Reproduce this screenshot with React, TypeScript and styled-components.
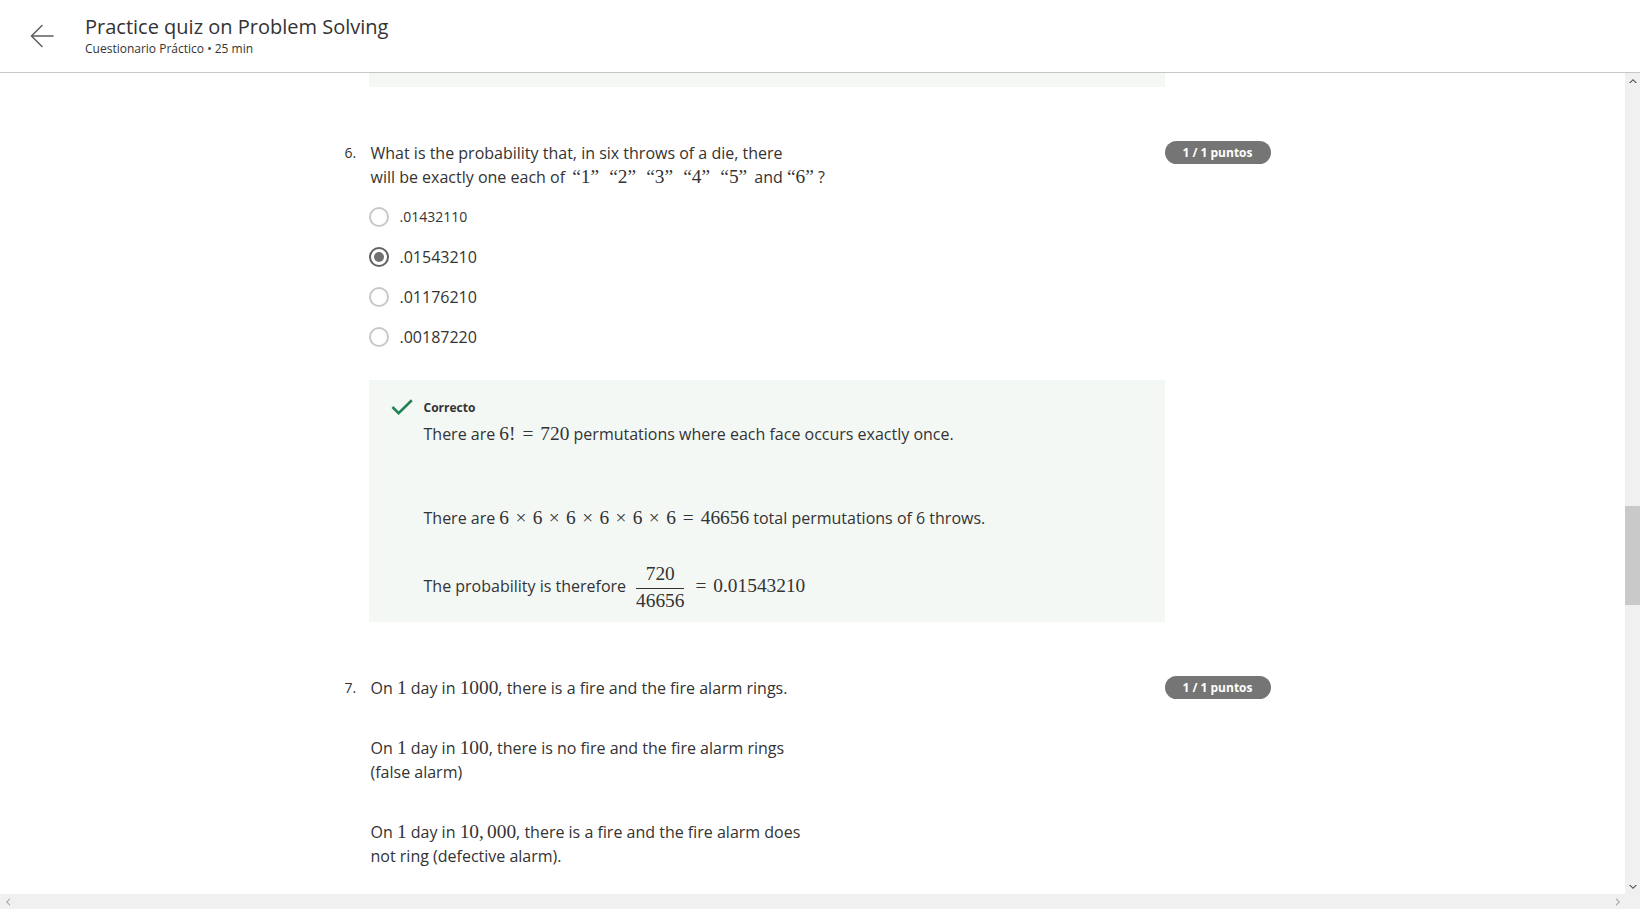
import React, { useCallback, useLayoutEffect, useRef, useState } from "react";
import styled, { createGlobalStyle } from "styled-components";

const GlobalStyle = createGlobalStyle`
  html, body {
    margin: 0;
    padding: 0;
    height: 100%;
    overflow: hidden;
    background: #ffffff;
  }
  body {
    font-family: "Open Sans", "Noto Sans", "Liberation Sans", sans-serif;
    color: #333333;
  }
  #root { height: 100%; }
  * { box-sizing: border-box; }
`;

const Page = styled.div`
  height: 100vh;
  display: flex;
  flex-direction: column;
`;

const Header = styled.header`
  flex: none;
  height: 73px;
  border-bottom: 1px solid #c6c6c6;
  display: flex;
  align-items: center;
  padding-left: 30px;
  gap: 31px;
  background: #ffffff;
`;

const BackButton = styled.button`
  border: 0;
  background: transparent;
  padding: 0;
  width: 24px;
  height: 24px;
  display: flex;
  align-items: center;
  justify-content: center;
  cursor: pointer;
`;

const TitleBlock = styled.div`
  display: flex;
  flex-direction: column;
  padding-bottom: 2px;
`;

const Title = styled.h1`
  margin: 0;
  font-size: 20px;
  line-height: 26px;
  font-weight: 400;
  color: #333333;
`;

const Subtitle = styled.div`
  margin-top: 1px;
  font-size: 12px;
  line-height: 16px;
  color: #333333;
`;

/* viewport: content + custom scrollbars */
const Viewport = styled.div`
  flex: 1;
  min-height: 0;
  display: grid;
  grid-template-columns: 1fr 15px;
  grid-template-rows: 1fr 15px;
`;

const ScrollArea = styled.main`
  min-height: 0;
  min-width: 0;
  overflow: scroll;
  position: relative;
  scrollbar-width: none;
  &::-webkit-scrollbar {
    display: none;
  }
`;

const VScrollbar = styled.div`
  background: #f0f0f0;
  display: flex;
  flex-direction: column;
  min-height: 0;
`;

const HScrollbar = styled.div`
  background: #f0f0f0;
  display: flex;
  flex-direction: row;
  align-items: stretch;
`;

const Corner = styled.div`
  background: #f0f0f0;
`;

const ScrollButton = styled.div`
  flex: none;
  width: 15px;
  height: 15px;
  display: flex;
  align-items: center;
  justify-content: center;
`;

const Track = styled.div`
  flex: 1;
  min-height: 0;
  display: flex;
  flex-direction: column;
`;

const Thumb = styled.div`
  flex: none;
  width: 15px;
  background: #c9c9c9;
`;

const Column = styled.div`
  width: 936px;
  margin: 0 auto;
  padding-right: 10px;
`;

const EarlierQuestions = styled.div`
  height: 3300px;
`;

const LaterQuestions = styled.div`
  height: 2300px;
`;

const Question = styled.section`
  display: grid;
  grid-template-columns: 24px 796px auto;
  align-items: start;
  margin-top: 54px;
`;

const Num = styled.div`
  font-size: 14px;
  line-height: 24px;
  color: #333333;
`;

const Body = styled.div`
  display: flex;
  flex-direction: column;
`;

const Para = styled.p<{ $gap?: number }>`
  margin: ${(p) => p.$gap ?? 0}px 0 0 0;
  font-size: 16px;
  line-height: 24px;
  color: #333333;
`;

const Prompt = styled(Para)`
  padding-left: 2px;
`;

const Badge = styled.div`
  width: 106px;
  height: 23px;
  border-radius: 12px;
  background: #757575;
  color: #ffffff;
  font-size: 12px;
  font-weight: 700;
  display: flex;
  align-items: center;
  justify-content: center;
`;

const M = styled.span`
  font-family: "Liberation Serif", "DejaVu Serif", serif;
  font-size: 1.21em;
  line-height: 1;
`;

const Quote = styled(M)`
  margin: 0 3px;
`;

const Rel = styled.span`
  margin: 0 0.36em;
`;

const Bin = styled.span`
  margin: 0 0.33em;
`;

const Punct = styled.span`
  margin-right: 0.1667em;
`;

const OptionList = styled.div`
  margin-top: 8px;
  display: flex;
  flex-direction: column;
`;

const OptionRow = styled.label`
  height: 40px;
  display: flex;
  align-items: center;
  gap: 11px;
  cursor: pointer;
`;

const Radio = styled.span<{ $checked?: boolean }>`
  flex: none;
  width: 20px;
  height: 20px;
  border-radius: 50%;
  border: ${(p) => (p.$checked ? "2px solid #616161" : "2px solid #c8c8c8")};
  display: flex;
  align-items: center;
  justify-content: center;
  background: #ffffff;

  &::after {
    content: "";
    display: ${(p) => (p.$checked ? "block" : "none")};
    width: 10px;
    height: 10px;
    border-radius: 50%;
    background: #707070;
  }
`;

const OptionText = styled.span<{ $small?: boolean }>`
  font-size: ${(p) => (p.$small ? 14 : 16)}px;
  line-height: 24px;
  color: #333333;
`;

const FeedbackBox = styled.div<{ $top?: number }>`
  margin-top: ${(p) => p.$top ?? 0}px;
  background: #f3f8f5;
  padding: 19px 20px 9px 22px;
  display: grid;
  grid-template-columns: 22px 1fr;
  column-gap: 11px;
`;

const PrevFeedback = styled.div`
  height: 180px;
  background: #f3f8f5;
  margin-left: 24px;
  width: 796px;
`;

const CheckWrap = styled.div`
  height: 16px;
  display: flex;
  align-items: center;
`;

const FeedbackLabel = styled.div`
  font-size: 12px;
  line-height: 16px;
  font-weight: 700;
  color: #333333;
  padding-top: 1px;
`;

const FeedbackContent = styled.div`
  grid-column: 2;
  display: flex;
  flex-direction: column;
`;

const Frac = styled.span`
  display: inline-flex;
  flex-direction: column;
  align-items: center;
  vertical-align: middle;
  font-family: "Liberation Serif", "DejaVu Serif", serif;
  font-size: 1.21em;
  margin: 0 2px 0 8px;
  padding: 0 2px;
`;

const FracNum = styled.span`
  line-height: 24px;
  padding-bottom: 2px;
  border-bottom: 1.4px solid #333333;
  align-self: stretch;
  text-align: center;
`;

const FracDen = styled.span`
  line-height: 24px;
`;

const ArrowLeftIcon = () => (
  <svg width="25" height="24" viewBox="0 0 25 24" fill="none" aria-hidden>
    <path d="M24 12H1.5M12.5 1L1.5 12L12.5 23" stroke="#5f5f5f" strokeWidth="1.6" strokeLinecap="round" strokeLinejoin="round" />
  </svg>
);

const CheckIcon = () => (
  <svg width="22" height="16" viewBox="0 0 22 16" fill="none" aria-hidden>
    <path d="M1.4 8L7.6 14.2L20.8 1.2" stroke="#1f8354" strokeWidth="2.6" />
  </svg>
);

type Dir = "up" | "down" | "left" | "right";
const arrowPoints: Record<Dir, string> = {
  up: "0,5 4,1 8,5 6.5,5 4,2.6 1.5,5",
  down: "0,1 4,5 8,1 6.5,1 4,3.4 1.5,1",
  left: "5,0 1,4 5,8 5,6.5 2.6,4 5,1.5",
  right: "1,0 5,4 1,8 1,6.5 3.4,4 1,1.5",
};

const ScrollArrow = ({ dir, color }: { dir: Dir; color: string }) => {
  const vertical = dir === "up" || dir === "down";
  return (
    <svg width={vertical ? 8 : 6} height={vertical ? 6 : 8} viewBox={vertical ? "0 0 8 6" : "0 0 6 8"} aria-hidden>
      <polygon points={arrowPoints[dir]} fill={color} />
    </svg>
  );
};

const options = [
  { value: ".01432110", small: true, checked: false },
  { value: ".01543210", small: false, checked: true },
  { value: ".01176210", small: false, checked: false },
  { value: ".00187220", small: false, checked: false },
];

export default function App() {
  const scrollRef = useRef<HTMLElement>(null);
  const prevRef = useRef<HTMLDivElement>(null);
  const trackRef = useRef<HTMLDivElement>(null);
  const [thumb, setThumb] = useState({ top: 0, size: 40 });

  const syncThumb = useCallback(() => {
    const area = scrollRef.current;
    const track = trackRef.current;
    if (!area || !track) return;
    const trackLen = track.clientHeight;
    const size = Math.max(20, (trackLen * area.clientHeight) / area.scrollHeight);
    const maxScroll = area.scrollHeight - area.clientHeight;
    const top = maxScroll > 0 ? ((trackLen - size) * area.scrollTop) / maxScroll : 0;
    setThumb({ top, size });
  }, []);

  useLayoutEffect(() => {
    const area = scrollRef.current;
    const prev = prevRef.current;
    if (area && prev) {
      area.scrollTop = prev.offsetTop + prev.offsetHeight - 14;
    }
    syncThumb();
  }, [syncThumb]);

  return (
    <Page>
      <GlobalStyle />
      <Header>
        <BackButton aria-label="Volver">
          <ArrowLeftIcon />
        </BackButton>
        <TitleBlock>
          <Title>Practice quiz on Problem Solving</Title>
          <Subtitle>Cuestionario Práctico • 25 min</Subtitle>
        </TitleBlock>
      </Header>
      <Viewport>
        <ScrollArea ref={scrollRef} onScroll={syncThumb}>
          <Column>
            <EarlierQuestions />
            <PrevFeedback ref={prevRef} />

            <Question>
              <Num>6.</Num>
              <Body>
                <Prompt>
                  What is the probability that, in six throws of a die, there
                  <br />
                  will be exactly one each of <Quote>“1”</Quote> <Quote>“2”</Quote> <Quote>“3”</Quote>{" "}
                  <Quote>“4”</Quote> <Quote>“5”</Quote> and <M>“6”</M> ?
                </Prompt>
                <OptionList>
                  {options.map((o) => (
                    <OptionRow key={o.value}>
                      <Radio $checked={o.checked} />
                      <OptionText $small={o.small}>{o.value}</OptionText>
                    </OptionRow>
                  ))}
                </OptionList>
                <FeedbackBox $top={23}>
                  <CheckWrap>
                    <CheckIcon />
                  </CheckWrap>
                  <FeedbackLabel>Correcto</FeedbackLabel>
                  <FeedbackContent>
                    <Para $gap={6}>
                      There are <M>6!<Rel>=</Rel>720</M> permutations where each face occurs exactly once.
                    </Para>
                    <Para $gap={60}>
                      There are{" "}
                      <M>
                        6<Bin>×</Bin>6<Bin>×</Bin>6<Bin>×</Bin>6<Bin>×</Bin>6<Bin>×</Bin>6<Rel>=</Rel>46656
                      </M>{" "}
                      total permutations of 6 throws.
                    </Para>
                    <Para $gap={32}>
                      The probability is therefore
                      <Frac>
                        <FracNum>720</FracNum>
                        <FracDen>46656</FracDen>
                      </Frac>
                      <M>
                        <Rel>=</Rel>0.01543210
                      </M>
                    </Para>
                  </FeedbackContent>
                </FeedbackBox>
              </Body>
              <Badge>1 / 1 puntos</Badge>
            </Question>

            <Question>
              <Num>7.</Num>
              <Body>
                <Prompt>
                  On <M>1</M> day in <M>1000</M>, there is a fire and the fire alarm rings.
                </Prompt>
                <Prompt $gap={36}>
                  On <M>1</M> day in <M>100</M>, there is no fire and the fire alarm rings
                  <br />
                  (false alarm)
                </Prompt>
                <Prompt $gap={36}>
                  On <M>1</M> day in{" "}
                  <M>
                    10,<Punct />000
                  </M>
                  , there is a fire and the fire alarm does
                  <br />
                  not ring (defective alarm).
                </Prompt>
              </Body>
              <Badge>1 / 1 puntos</Badge>
            </Question>

            <LaterQuestions />
          </Column>
        </ScrollArea>

        <VScrollbar>
          <ScrollButton>
            <ScrollArrow dir="up" color="#505050" />
          </ScrollButton>
          <Track ref={trackRef}>
            <Thumb style={{ marginTop: thumb.top, height: thumb.size }} />
          </Track>
          <ScrollButton>
            <ScrollArrow dir="down" color="#505050" />
          </ScrollButton>
        </VScrollbar>

        <HScrollbar>
          <ScrollButton>
            <ScrollArrow dir="left" color="#a8a8a8" />
          </ScrollButton>
          <Track />
          <ScrollButton>
            <ScrollArrow dir="right" color="#a8a8a8" />
          </ScrollButton>
        </HScrollbar>
        <Corner />
      </Viewport>
    </Page>
  );
}
